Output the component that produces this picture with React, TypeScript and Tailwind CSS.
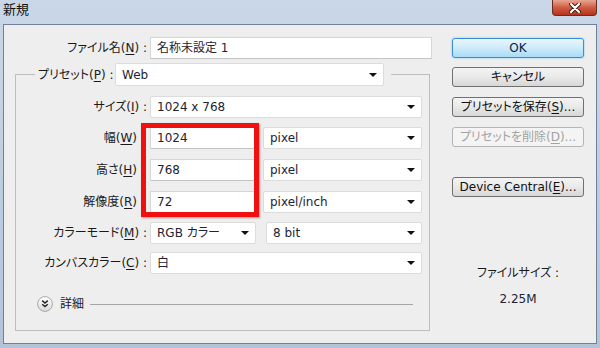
import type { ReactNode } from 'react';

function Key({ k }: { k: string }) {
  return <span className="underline underline-offset-[2px]">{k}</span>;
}

function Arrow() {
  return (
    <svg width="8" height="4" viewBox="0 0 8 4" className="shrink-0">
      <path d="M0 0h8L4 4z" fill="#111" />
    </svg>
  );
}

function Select({ value, className }: { value: string; className: string }) {
  return (
    <div
      className={`flex h-[22px] items-center justify-between rounded-[2px] border border-[#dcdcdc] bg-white pl-[6px] pr-[6px] text-[#1d2433] ${className}`}
    >
      <span className="whitespace-nowrap">{value}</span>
      <Arrow />
    </div>
  );
}

function Field({ value, className }: { value: string; className: string }) {
  return (
    <div
      className={`flex h-[22px] items-center border border-[#d6d6d6] border-b-[#c4c4c4] bg-white pl-[6px] text-[#1d2433] ${className}`}
    >
      {value}
    </div>
  );
}

function Label({ children, className }: { children: ReactNode; className: string }) {
  return <div className={`whitespace-nowrap text-right text-[#1a1a1a] ${className}`}>{children}</div>;
}

function Btn({ children, kind, className }: { children: ReactNode; kind?: 'ok' | 'off'; className: string }) {
  const look =
    kind === 'ok'
      ? 'border-[#3b8fd0] bg-gradient-to-b from-[#e9f6fd] via-[#cdebfa] to-[#a9dbf6] text-[#102040] shadow-[0_0_2px_#5fc0f0]'
      : kind === 'off'
        ? 'border-[#b3b6b9] bg-[#f4f4f4] text-[#a3a3a3]'
        : 'border-[#707070] bg-gradient-to-b from-[#f4f4f4] via-[#e9e9e9] to-[#d7d7d7] text-[#111]';
  return (
    <div className={`flex h-[20px] w-[132px] items-center justify-center rounded-[3px] border ${look} ${className}`}>
      <span className="whitespace-nowrap">{children}</span>
    </div>
  );
}

export default function App() {
  return (
    <div className="relative flex h-[348px] w-[600px] flex-col overflow-hidden bg-gradient-to-b from-[#c9d7e8] to-[#b3c4d9] text-[12px] leading-[16px] [font-family:'DejaVu_Sans','Noto_Sans_CJK_JP',sans-serif] [font-feature-settings:'palt']">
      {/* title bar */}
      <div className="flex h-[24px] items-start justify-between pl-[3px]">
        <span className="mt-[2px] text-[13px] text-[#111]">新規</span>
        <div className="mr-[3px] flex h-[16px] w-[45px] items-center justify-center rounded-b-[4px] border border-t-0 border-[#6e2a20] bg-gradient-to-b from-[#e7a693] via-[#cf5b40] to-[#b5321b]">
          <svg width="12" height="10" viewBox="0 0 12 10">
            <path d="M2 1l8 8M10 1L2 9" stroke="#3a1a14" strokeWidth="4" strokeLinecap="round" />
            <path d="M2 1l8 8M10 1L2 9" stroke="#fff" strokeWidth="2.2" strokeLinecap="round" />
          </svg>
        </div>
      </div>

      {/* body */}
      <div className="mx-[3px] mb-[4px] flex flex-1 border border-[#6f8198] bg-[#eeeeee]">
        <div className="flex w-[430px] flex-col pl-[11px] pt-[12px]">
          <div className="flex h-[22px] items-center">
            <Label className="w-[135px] pr-[3px]">
              ファイル名(<Key k="N" />) :
            </Label>
            <Field value="名称未設定 1" className="w-[282px]" />
          </div>

          <fieldset className="mt-[4px] w-[415px] border border-[#bdbdbd] pb-[18px]">
            <legend className="ml-[19px] pl-[3px] pr-[7px]">
              <div className="flex items-center">
                <Label className="w-[74px] pr-[3px]">
                  プリセット(<Key k="P" />) :
                </Label>
                <Select value="Web" className="ml-[3px] h-[23px] w-[269px]" />
              </div>
            </legend>

            <div className="mt-[10px] flex items-center">
              <Label className="w-[134px] pr-[3px]">
                サイズ(<Key k="I" />) :
              </Label>
              <Select value="1024 x 768" className="w-[272px]" />
            </div>

            <div className="mt-[9px] flex items-center">
              <Label className="w-[134px] pr-[13px]">
                幅(<Key k="W" />)
              </Label>
              <Field value="1024" className="w-[106px]" />
              <Select value="pixel" className="ml-[7px] w-[159px]" />
            </div>

            <div className="mt-[10px] flex items-center">
              <Label className="w-[134px] pr-[13px]">
                高さ(<Key k="H" />)
              </Label>
              <Field value="768" className="w-[106px]" />
              <Select value="pixel" className="ml-[7px] w-[159px]" />
            </div>

            <div className="mt-[10px] flex items-center">
              <Label className="w-[134px] pr-[13px]">
                解像度(<Key k="R" />)
              </Label>
              <Field value="72" className="w-[106px]" />
              <Select value="pixel/inch" className="ml-[7px] w-[159px]" />
            </div>

            <div className="mt-[9px] flex items-center">
              <Label className="w-[134px] pr-[3px]">
                カラーモード(<Key k="M" />) :
              </Label>
              <Select value="RGB カラー" className="w-[106px]" />
              <Select value="8 bit" className="ml-[10px] w-[156px]" />
            </div>

            <div className="mt-[8px] flex items-center">
              <Label className="w-[134px] pr-[3px]">
                カンバスカラー(<Key k="C" />) :
              </Label>
              <Select value="白" className="w-[272px]" />
            </div>

            <div className="mt-[22px] flex h-[16px] items-center pl-[21px] pr-[16px]">
              <svg width="16" height="16" viewBox="0 0 16 16" className="shrink-0">
                <defs>
                  <linearGradient id="dg" x1="0" y1="0" x2="0" y2="1">
                    <stop offset="0" stopColor="#ffffff" />
                    <stop offset="1" stopColor="#d9d9d9" />
                  </linearGradient>
                </defs>
                <circle cx="8" cy="8" r="7.4" fill="url(#dg)" stroke="#a9a9a9" />
                <path d="M5.2 4.6L8 7l2.8-2.4M5.2 8.2L8 10.6l2.8-2.4" fill="none" stroke="#222" strokeWidth="1.4" />
              </svg>
              <span className="ml-[7px] text-[#1a1a1a]">詳細</span>
              <div className="ml-[6px] h-px flex-1 bg-[#a6a6a6]" />
            </div>
          </fieldset>
        </div>

        <div className="flex flex-col pl-[18px] pt-[13px]">
          <Btn kind="ok" className="">OK</Btn>
          <Btn className="mt-[9px]">キャンセル</Btn>
          <Btn className="mt-[10px]">
            プリセットを保存(<Key k="S" />)...
          </Btn>
          <Btn kind="off" className="mt-[10px]">
            プリセットを削除(<Key k="D" />)...
          </Btn>
          <Btn className="mt-[30px]">
            Device Central(<Key k="E" />)...
          </Btn>
          <div className="mt-[68px] w-[132px] text-center text-[#1a1a1a]">ファイルサイズ :</div>
          <div className="mt-[10px] w-[132px] text-center text-[#1d2433]">2.25M</div>
        </div>
      </div>

      {/* red annotation box */}
      <div className="absolute left-[141px] top-[123px] h-[94px] w-[118px] border-[5px] border-[#f01010] shadow-[1px_1px_2px_rgba(0,0,0,0.35)]" />
    </div>
  );
}
